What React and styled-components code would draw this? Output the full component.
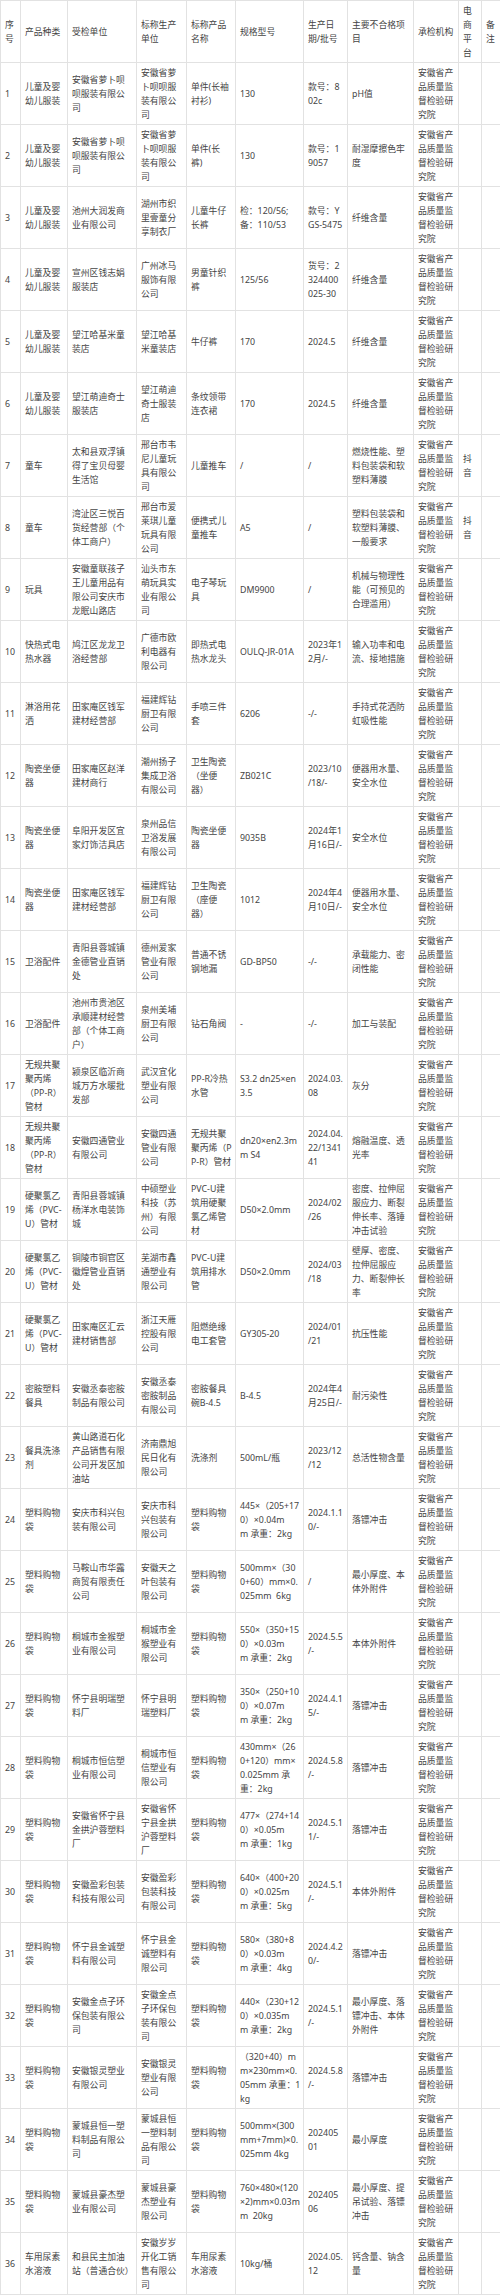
import React from "react";
import styled, { createGlobalStyle, css } from "styled-components";

const GlobalStyle = createGlobalStyle`
  html, body {
    margin: 0;
    padding: 0;
    background: #ffffff;
  }
  body {
    font-family: "Noto Sans", "Noto Sans CJK SC", sans-serif;
  }
`;

const Table = styled.table`
  width: 500px;
  border-collapse: collapse;
  table-layout: fixed;
  color: #444;
  font-size: 8.8px;
  line-height: 14px;
`;

const Col = styled.col`
  width: ${(p) => p.$w}px;
`;

const Row = styled.tr`
  height: 62px;
`;

const cellStyle = css`
  border: 1px solid #e2e2e2;
  padding: 2px 4px;
  vertical-align: middle;
  text-align: left;
  word-break: break-all;
  white-space: pre-line;
  font-weight: normal;
`;

const HeadCell = styled.th`
  ${cellStyle}
  overflow: hidden;
`;

// $pre: the line breaks are written in the data (spec / date columns)
const Cell = styled.td`
  ${cellStyle}
  white-space: ${(p) => (p.$pre ? "pre" : "pre-line")};
  overflow: ${(p) => (p.$pre ? "visible" : "hidden")};
`;

const widths = [20, 47, 69, 50, 49, 68, 44, 66, 45, 23, 19];

const headers = [
  "序号",
  "产品种类",
  "受检单位",
  "标称生产单位",
  "标称产品名称",
  "规格型号",
  "生产日期/批号",
  "主要不合格项目",
  "承检机构",
  "电商平台",
  "备注"
];

const LAB = "安徽省产品质量监督检验研究院";
const KID = "儿童及婴幼儿服装";
const BAG = "塑料购物袋";
const BAG2 = "塑料购物\n袋";
const PPR = "无规共聚聚丙烯（PP-R）管材";
const PVC = "硬聚氯乙烯（PVC-U）管材";

const rows = [
  [KID, "安徽省萝卜呗呗服装有限公司", "安徽省萝卜呗呗服装有限公司", "单件(长袖\n衬衫)", "130", "款号：8\n02c", "pH值"],
  [KID, "安徽省萝卜呗呗服装有限公司", "安徽省萝卜呗呗服装有限公司", "单件(长\n裤)", "130", "款号：1\n9057", "耐湿摩擦色牢度"],
  [KID, "池州大润发商业有限公司", "湖州市织里壹童分享制衣厂", "儿童牛仔\n长裤", "检：120/56;\n备：110/53", "款号：Y\nGS-5475", "纤维含量"],
  [KID, "宣州区钱志娟服装店", "广州冰马服饰有限公司", "男童针织\n裤", "125/56", "货号：2\n324400\n025-30", "纤维含量"],
  [KID, "望江哈基米童装店", "望江哈基米童装店", "牛仔裤", "170", "2024.5", "纤维含量"],
  [KID, "望江萌迪奇士服装店", "望江萌迪奇士服装店", "条纹领带\n连衣裙", "170", "2024.5", "纤维含量"],
  ["童车", "太和县双浮镇得了宝贝母婴生活馆", "邢台市韦尼儿童玩具有限公司", "儿童推车", "/", "/", "燃烧性能、塑料包装袋和软塑料薄膜", "抖音"],
  ["童车", "湾沚区三悦百货经营部（个体工商户）", "邢台市爱莱琪儿童玩具有限公司", "便携式儿\n童推车", "A5", "/", "塑料包装袋和软塑料薄膜、一般要求", "抖音"],
  ["玩具", "安徽童联孩子王儿童用品有限公司安庆市龙眠山路店", "汕头市东萌玩具实业有限公司", "电子琴玩\n具", "DM9900", "/", "机械与物理性能（可预见的合理滥用）"],
  ["快热式电热水器", "鸠江区龙龙卫浴经营部", "广德市欧利电器有限公司", "即热式电\n热水龙头", "OULQ-JR-01A", "2023年1\n2月/-", "输入功率和电流、接地措施"],
  ["淋浴用花洒", "田家庵区钱军建材经营部", "福建辉钻厨卫有限公司", "手喷三件\n套", "6206", "-/-", "手持式花洒防虹吸性能"],
  ["陶瓷坐便器", "田家庵区赵洋建材商行", "潮州扬子集成卫浴有限公司", "卫生陶瓷\n（坐便\n器）", "ZB021C", "2023/10\n/18/-", "便器用水量、安全水位"],
  ["陶瓷坐便器", "阜阳开发区宜家灯饰洁具店", "泉州品信卫浴发展有限公司", "陶瓷坐便\n器", "9035B", "2024年1\n月16日/-", "安全水位"],
  ["陶瓷坐便器", "田家庵区钱军建材经营部", "福建辉钻厨卫有限公司", "卫生陶瓷\n（座便\n器）", "1012", "2024年4\n月10日/-", "便器用水量、安全水位"],
  ["卫浴配件", "青阳县蓉城镇金德管业直销处", "德州爱家管业有限公司", "普通不锈\n钢地漏", "GD-BP50", "-/-", "承载能力、密闭性能"],
  ["卫浴配件", "池州市贵池区承顺建材经营部（个体工商户）", "泉州美埔厨卫有限公司", "钻石角阀", "-", "-/-", "加工与装配"],
  [PPR, "颍泉区临沂商城万方水暖批发部", "武汉宜化塑业有限公司", "PP-R冷热\n水管", "S3.2 dn25×en\n3.5", "2024.03.\n08", "灰分"],
  [PPR, "安徽四通管业有限公司", "安徽四通管业有限公司", "无规共聚\n聚丙烯（P\nP-R）管材", "dn20×en2.3m\nm S4", "2024.04.\n22/1341\n41", "熔融温度、透光率"],
  [PVC, "青阳县蓉城镇杨洋水电装饰城", "中硕塑业科技（苏州）有限公司", "PVC-U建\n筑用硬聚\n氯乙烯管\n材", "D50×2.0mm", "2024/02\n/26", "密度、拉伸屈服应力、断裂伸长率、落锤冲击试验"],
  [PVC, "铜陵市铜官区徽煌管业直销处", "芜湖市鑫通塑业有限公司", "PVC-U建\n筑用排水\n管", "D50×2.0mm", "2024/03\n/18", "壁厚、密度、拉伸屈服应力、断裂伸长率"],
  [PVC, "田家庵区汇云建材销售部", "浙江天雁控股有限公司", "阻燃绝缘\n电工套管", "GY305-20", "2024/01\n/21", "抗压性能"],
  ["密胺塑料餐具", "安徽丞泰密胺制品有限公司", "安徽丞泰密胺制品有限公司", "密胺餐具\n碗B-4.5", "B-4.5", "2024年4\n月25日/-", "耐污染性"],
  ["餐具洗涤剂", "黄山路道石化产品销售有限公司开发区加油站", "济南鼎旭民日化有限公司", "洗涤剂", "500mL/瓶", "2023/12\n/12", "总活性物含量"],
  [BAG, "安庆市科兴包装有限公司", "安庆市科兴包装有限公司", BAG2, "445×（205+17\n0）×0.04m\nm 承重：2kg", "2024.1.1\n0/-", "落镖冲击"],
  [BAG, "马鞍山市华露商贸有限责任公司", "安徽天之叶包装有限公司", BAG2, "500mm×（30\n0+60）mm×0.\n025mm  6kg", "/", "最小厚度、本体外附件"],
  [BAG, "桐城市金猴塑业有限公司", "桐城市金猴塑业有限公司", BAG2, "550×（350+15\n0）×0.03m\nm 承重：2kg", "2024.5.5\n/-", "本体外附件"],
  [BAG, "怀宁县明瑞塑料厂", "怀宁县明瑞塑料厂", BAG2, "350×（250+10\n0）×0.07m\nm 承重：2kg", "2024.4.1\n5/-", "落镖冲击"],
  [BAG, "桐城市恒信塑业有限公司", "桐城市恒信塑业有限公司", BAG2, "430mm×（26\n0+120）mm×\n0.025mm 承\n重：2kg", "2024.5.8\n/-", "落镖冲击"],
  [BAG, "安徽省怀宁县金拱沪蓉塑料厂", "安徽省怀宁县金拱沪蓉塑料厂", BAG2, "477×（274+14\n0）×0.05m\nm 承重：1kg", "2024.5.1\n1/-", "落镖冲击"],
  [BAG, "安徽盈彩包装科技有限公司", "安徽盈彩包装科技有限公司", BAG2, "640×（400+20\n0）×0.025m\nm 承重：5kg", "2024.5.1\n/-", "本体外附件"],
  [BAG, "怀宁县金诚塑料有限公司", "怀宁县金诚塑料有限公司", BAG2, "580×（380+8\n0）×0.03m\nm 承重：4kg", "2024.4.2\n0/-", "落镖冲击"],
  [BAG, "安徽金点子环保包装有限公司", "安徽金点子环保包装有限公司", BAG2, "440×（230+12\n0）×0.035m\nm 承重：2kg", "2024.5.1\n/-", "最小厚度、落镖冲击、本体外附件"],
  [BAG, "安徽银灵塑业有限公司", "安徽银灵塑业有限公司", BAG2, "（320+40）m\nm×230mm×0.\n05mm 承重：1\nkg", "2024.5.8\n/-", "落镖冲击"],
  [BAG, "蒙城县恒一塑料制品有限公司", "蒙城县恒一塑料制品有限公司", BAG2, "500mm×(300\nmm+7mm)×0.\n025mm 4kg", "202405\n01", "最小厚度"],
  [BAG, "蒙城县豪杰塑业有限公司", "蒙城县豪杰塑业有限公司", BAG2, "760×480×(120\n×2)mm×0.03m\nm  20kg", "202405\n06", "最小厚度、提吊试验、落镖冲击"],
  ["车用尿素水溶液", "和县民主加油站（普通合伙）", "安徽岁岁开化工销售有限公司", "车用尿素\n水溶液", "10kg/桶", "2024.05.\n12", "钙含量、钠含量"]
];

export default function App() {
  return (
    <>
      <GlobalStyle />
      <Table>
        <colgroup>
          {widths.map((w, i) => (
            <Col key={i} $w={w} />
          ))}
        </colgroup>
        <thead>
          <Row>
            {headers.map((h) => (
              <HeadCell key={h}>{h}</HeadCell>
            ))}
          </Row>
        </thead>
        <tbody>
          {rows.map((r, i) => {
            const [kind, unit, maker, name, spec, date, fail, platform = ""] = r;
            return (
              <Row key={i}>
                <Cell>{i + 1}</Cell>
                <Cell>{kind}</Cell>
                <Cell>{unit}</Cell>
                <Cell>{maker}</Cell>
                <Cell $pre>{name}</Cell>
                <Cell $pre>{spec}</Cell>
                <Cell $pre>{date}</Cell>
                <Cell>{fail}</Cell>
                <Cell>{LAB}</Cell>
                <Cell>{platform}</Cell>
                <Cell></Cell>
              </Row>
            );
          })}
        </tbody>
      </Table>
    </>
  );
}
